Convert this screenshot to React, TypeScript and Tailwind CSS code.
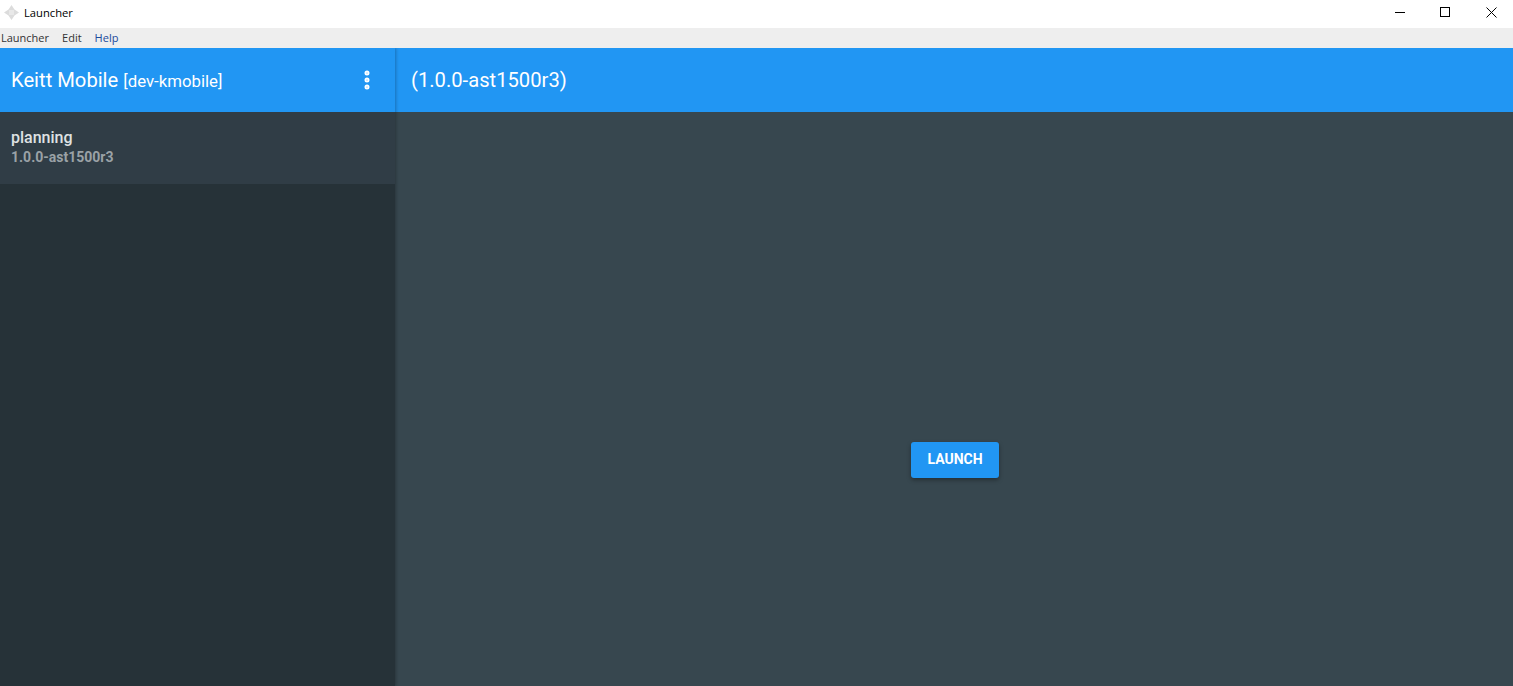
import { MoreVertical } from "lucide-react";

const menus = [
  { label: "Launcher", color: "text-[#333]" },
  { label: "Edit", color: "text-[#333]" },
  { label: "Help", color: "text-[#1a4a9c]" },
];

const App = () => {
  return (
    <div className="h-[686px] w-[1513px] overflow-hidden flex flex-col bg-[#37474f] font-['Roboto',sans-serif]">
      {/* window chrome */}
      <div className="h-7 bg-white flex items-center justify-between shrink-0">
        <div className="flex items-center pl-1 pb-[2px] gap-[5px] font-['Open_Sans','Noto_Sans',sans-serif] text-[11.2px] text-black">
          <svg width="15" height="15" viewBox="0 0 15 15">
            <path d="M7.5 0 L10.5 4.5 L15 7.5 L10.5 10.5 L7.5 15 L4.5 10.5 L0 7.5 L4.5 4.5 Z" fill="#dcdcdc" />
            <rect x="5" y="5" width="5" height="5" fill="#e8e8e8" />
          </svg>
          <span>Launcher</span>
        </div>
        <div className="flex items-center pr-[16px] pb-[4px]">
          <div className="h-px w-[10px] bg-black mr-[35px]" />
          <div className="h-[10px] w-[10px] border border-black mr-[36px]" />
          <svg width="11" height="11" viewBox="0 0 11 11" stroke="black" strokeWidth="1">
            <path d="M0.5 0.5 L10.5 10.5 M10.5 0.5 L0.5 10.5" />
          </svg>
        </div>
      </div>
      <div className="h-5 bg-[#eeeeee] flex items-center pl-[1px] gap-[13px] shrink-0 font-['Open_Sans','Noto_Sans',sans-serif] text-[11px]">
        {menus.map((m) => (
          <span key={m.label} className={m.color}>
            {m.label}
          </span>
        ))}
      </div>

      <div className="flex flex-1 min-h-0 overflow-hidden">
        {/* sidebar */}
        <div className="w-[395px] shrink-0 flex flex-col bg-[#263238] relative z-10 shadow-[1px_0_3px_rgba(0,0,0,0.25)]">
          <div className="h-16 bg-[#2196f3] flex items-center justify-between pl-[11px] pr-[16px] text-white shrink-0">
            <div className="flex items-baseline gap-[5px]">
              <span className="text-[20.2px]">Keitt Mobile</span>
              <span className="text-[16.8px]">[dev-kmobile]</span>
            </div>
            <MoreVertical className="w-6 h-6" strokeWidth={3} />
          </div>
          <div className="h-[72px] bg-[#303d46] pl-[11px] pt-[16px]">
            <div className="text-[16px] leading-5 font-medium text-[#dfe2e3]">planning</div>
            <div className="text-[14px] leading-[18px] font-bold text-[#9aa2a6]">1.0.0-ast1500r3</div>
          </div>
        </div>

        {/* main pane */}
        <div className="flex-1 flex flex-col">
          <div className="h-16 bg-[#2196f3] flex items-center pl-[16px] text-white text-[20.2px] shrink-0">
            (1.0.0-ast1500r3)
          </div>
          <div className="flex-1 flex items-center justify-center pt-[122px] pl-[2px]">
            <button className="h-9 w-[88px] pb-[2px] bg-[#2196f3] text-white text-sm font-bold rounded-[3px] shadow-[0_2px_4px_rgba(0,0,0,0.35)]">
              LAUNCH
            </button>
          </div>
        </div>
      </div>
    </div>
  );
};

export default App;
